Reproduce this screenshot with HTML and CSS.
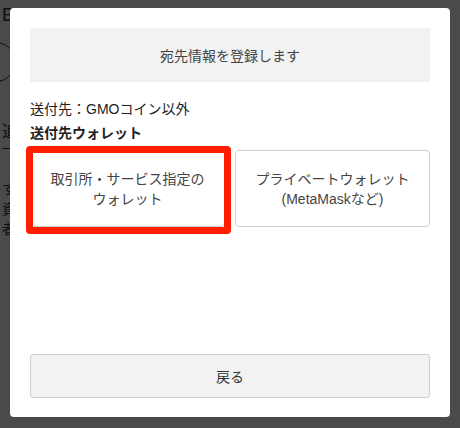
FILE: index.html
```html
<!DOCTYPE html>
<html lang="ja">
<head>
<meta charset="utf-8">
<link rel="stylesheet" href="styles.css">
</head>
<body>
<div class="page">
  <div class="page-title">Bitcoin</div>
  <div class="page-circle"></div>
  <div class="page-tab">追加</div>
  <div class="page-text">
    <p>すべて</p>
    <p>資産</p>
    <p>者</p>
  </div>
</div>
<div class="overlay">
  <div class="modal">
    <div class="modal-head">宛先情報を登録します</div>
    <div class="label">送付先：GMOコイン以外</div>
    <div class="label label-bold">送付先ウォレット</div>
    <div class="choices">
      <button class="choice choice-marked">取引所・サービス指定の<br>ウォレット<span class="mark"></span></button>
      <button class="choice">プライベートウォレット<br>(MetaMaskなど)</button>
    </div>
    <button class="back">戻る</button>
  </div>
</div>
</body>
</html>
```
FILE: styles.css
```css
* { box-sizing: border-box; }
html, body { margin: 0; padding: 0; }
body {
  width: 460px;
  height: 428px;
  overflow: hidden;
  font-family: "Liberation Sans", "Noto Sans CJK JP", sans-serif;
  background: #fff;
  color: #222;
}
.page {
  padding: 4px 0 0 2px;
  font-size: 16px;
  color: #333;
}
.page-title { font-size: 18px; line-height: 22px; }
.page-circle {
  width: 40px; height: 40px;
  border: 1.5px solid #333;
  border-radius: 50%;
  margin: 16px 0 0 -26px;
}
.page-tab {
  margin-top: 32px;
  padding: 4px 0 6px;
  border-bottom: 1px solid #333;
  width: 60px;
}
.page-text { margin-top: 30px; font-size: 14px; }
.page-text p { margin: 0; line-height: 20px; }

.overlay {
  position: fixed;
  inset: 0;
  background: rgba(0, 0, 0, 0.71);
  padding: 8px 10px 11px;
}
.modal {
  background: #fff;
  border-radius: 4px;
  height: 409px;
  padding: 20px 20px 19px;
  display: flex;
  flex-direction: column;
}
.modal-head {
  background: #f2f2f2;
  height: 54px;
  display: flex;
  align-items: center;
  justify-content: center;
  font-size: 14px;
  color: #444;
  flex-shrink: 0;
}
.label {
  font-size: 14px;
  line-height: 24px;
  color: #222;
}
.modal-head + .label { margin-top: 15px; }
.label-bold { font-weight: bold; }
.choices {
  display: flex;
  gap: 10px;
  margin-top: 5px;
}
.choice {
  position: relative;
  flex: 1;
  height: 77px;
  background: #fff;
  border: 1px solid #cfcfcf;
  border-radius: 4px;
  font-family: inherit;
  font-size: 14px;
  line-height: 20px;
  color: #444;
  padding: 0;
}
.mark {
  position: absolute;
  left: -5px;
  top: -5px;
  right: -7px;
  bottom: -8px;
  border: 7px solid #ff1e00;
  border-radius: 4px;
}
.back {
  margin-top: auto;
  height: 44px;
  background: #f2f2f2;
  border: 1px solid #cfcfcf;
  border-radius: 3px;
  font-family: inherit;
  font-size: 14px;
  color: #333;
}
```
